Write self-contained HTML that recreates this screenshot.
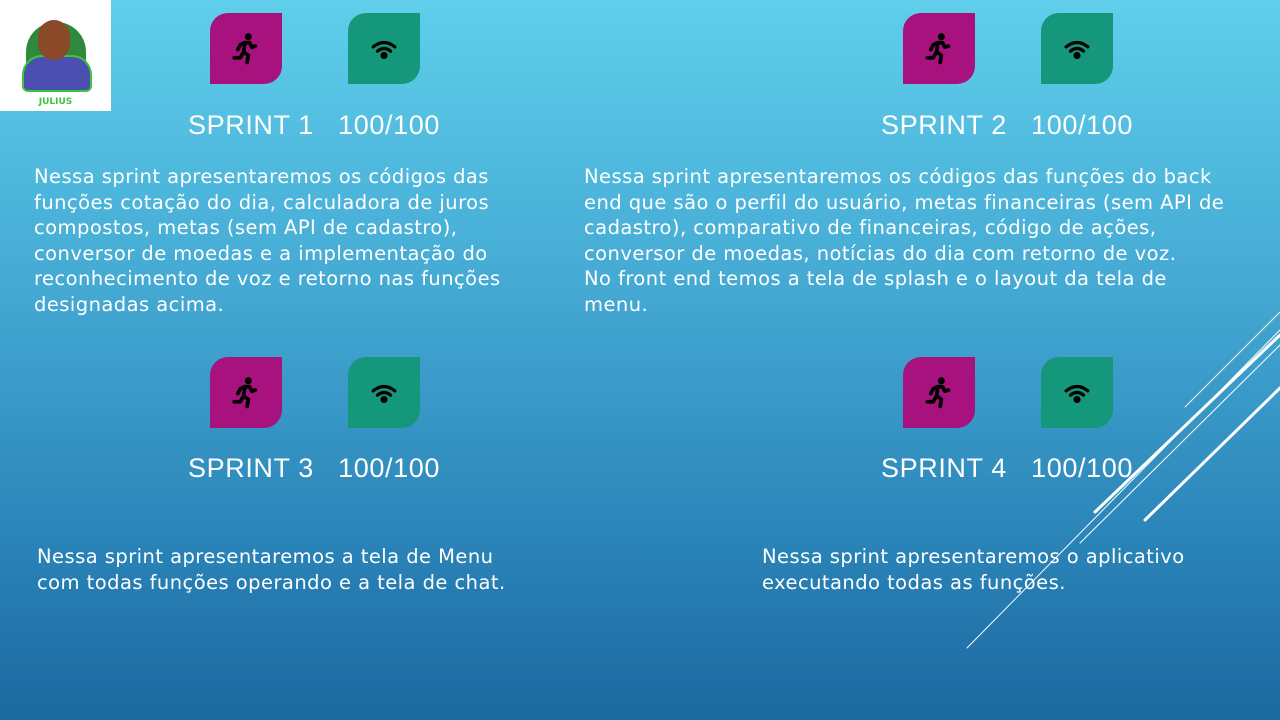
<!DOCTYPE html>
<html><head><meta charset="utf-8"><style>
body{margin:0;width:1280px;height:720px;overflow:hidden;position:relative;
background:linear-gradient(180deg,#5fcfec 0%,#44a9d3 40%,#2a84b8 75%,#1c68a0 100%);
font-family:"DejaVu Sans","Liberation Sans",sans-serif;color:#fff;}
.ic{position:absolute;width:72px;height:71px;border-radius:18px 0 18px 0;display:flex;align-items:center;justify-content:center}
.m{background:#a8127f}.g{background:#14977a}
.t{position:absolute;font-family:"Liberation Sans",sans-serif;font-size:27px;letter-spacing:0.6px;white-space:pre}
.p{position:absolute;font-size:19.5px;line-height:25.5px;white-space:pre;letter-spacing:0.45px}
</style></head><body>
<div style="position:absolute;left:0;top:0;width:111px;height:111px;background:#fff">
 <div style="position:absolute;left:26px;top:22px;width:60px;height:66px;background:#2e8a3a;border-radius:30px 30px 14px 14px"></div>
 <div style="position:absolute;left:22px;top:55px;width:66px;height:33px;background:#4a4fb0;border-radius:20px 20px 6px 6px;border:2px solid #3ec43e"></div>
 <div style="position:absolute;left:38px;top:20px;width:32px;height:40px;background:#8a4a2a;border-radius:16px"></div>
 <div style="position:absolute;left:0;width:111px;top:97px;text-align:center;font-size:9px;font-weight:bold;color:#3ec43e">JULIUS</div>
</div>
<svg width="0" height="0" style="position:absolute"><defs>
<g id="run"><circle cx="14" cy="3" r="3"/><path d="M11 8 L7 10 L5 14 M11 8 L15 8 L17 12 L20 11 M11 8 L10 16 L14 19 L13 25 M10 16 L7 21 L2 21" fill="none" stroke="#000" stroke-width="3.2" stroke-linecap="round" stroke-linejoin="round"/></g>
<g id="wifi" fill="none" stroke="#000" stroke-width="3" stroke-linecap="round"><path d="M2 7 Q12 -1 22 7"/><path d="M6 11 Q12 6 18 11"/><circle cx="12" cy="15" r="1.8" fill="#000"/></g>
</defs></svg>
<div class="ic m" style="left:210px;top:13px"><svg width="28" height="32" viewBox="0 0 24 27"><use href="#run"/></svg></div>
<div class="ic g" style="left:348px;top:13px"><svg width="26" height="20" viewBox="0 0 24 18"><use href="#wifi"/></svg></div>
<div class="ic m" style="left:903px;top:13px"><svg width="28" height="32" viewBox="0 0 24 27"><use href="#run"/></svg></div>
<div class="ic g" style="left:1041px;top:13px"><svg width="26" height="20" viewBox="0 0 24 18"><use href="#wifi"/></svg></div>
<div class="ic m" style="left:210px;top:357px"><svg width="28" height="32" viewBox="0 0 24 27"><use href="#run"/></svg></div>
<div class="ic g" style="left:348px;top:357px"><svg width="26" height="20" viewBox="0 0 24 18"><use href="#wifi"/></svg></div>
<div class="ic m" style="left:903px;top:357px"><svg width="28" height="32" viewBox="0 0 24 27"><use href="#run"/></svg></div>
<div class="ic g" style="left:1041px;top:357px"><svg width="26" height="20" viewBox="0 0 24 18"><use href="#wifi"/></svg></div>
<div class="t" style="left:188px;top:110px">SPRINT 1   100/100</div>
<div class="t" style="left:881px;top:110px">SPRINT 2   100/100</div>
<div class="t" style="left:188px;top:453px">SPRINT 3   100/100</div>
<div class="t" style="left:881px;top:453px">SPRINT 4   100/100</div>
<div class="p" style="left:34px;top:164px">Nessa sprint apresentaremos os códigos das
funções cotação do dia, calculadora de juros
compostos, metas (sem API de cadastro),
conversor de moedas e a implementação do
reconhecimento de voz e retorno nas funções
designadas acima.</div>
<div class="p" style="left:584px;top:164px">Nessa sprint apresentaremos os códigos das funções do back
end que são o perfil do usuário, metas financeiras (sem API de
cadastro), comparativo de financeiras, código de ações,
conversor de moedas, notícias do dia com retorno de voz.
No front end temos a tela de splash e o layout da tela de
menu.</div>
<div class="p" style="left:37px;top:544px">Nessa sprint apresentaremos a tela de Menu
com todas funções operando e a tela de chat.</div>
<div class="p" style="left:762px;top:544px">Nessa sprint apresentaremos o aplicativo
executando todas as funções.</div>
<svg style="position:absolute;left:0;top:0" width="1280" height="720">
<g stroke="#fff" stroke-linecap="round">
<line x1="1095" y1="512" x2="1280" y2="335" stroke-width="3"/>
<line x1="1145" y1="520" x2="1280" y2="388" stroke-width="3"/>
<line x1="1185" y1="407" x2="1280" y2="312" stroke-width="1"/>
<line x1="1080" y1="543" x2="1280" y2="345" stroke-width="1"/>
<line x1="967" y1="648" x2="1280" y2="330" stroke-width="1"/>
</g></svg>
</body></html>
